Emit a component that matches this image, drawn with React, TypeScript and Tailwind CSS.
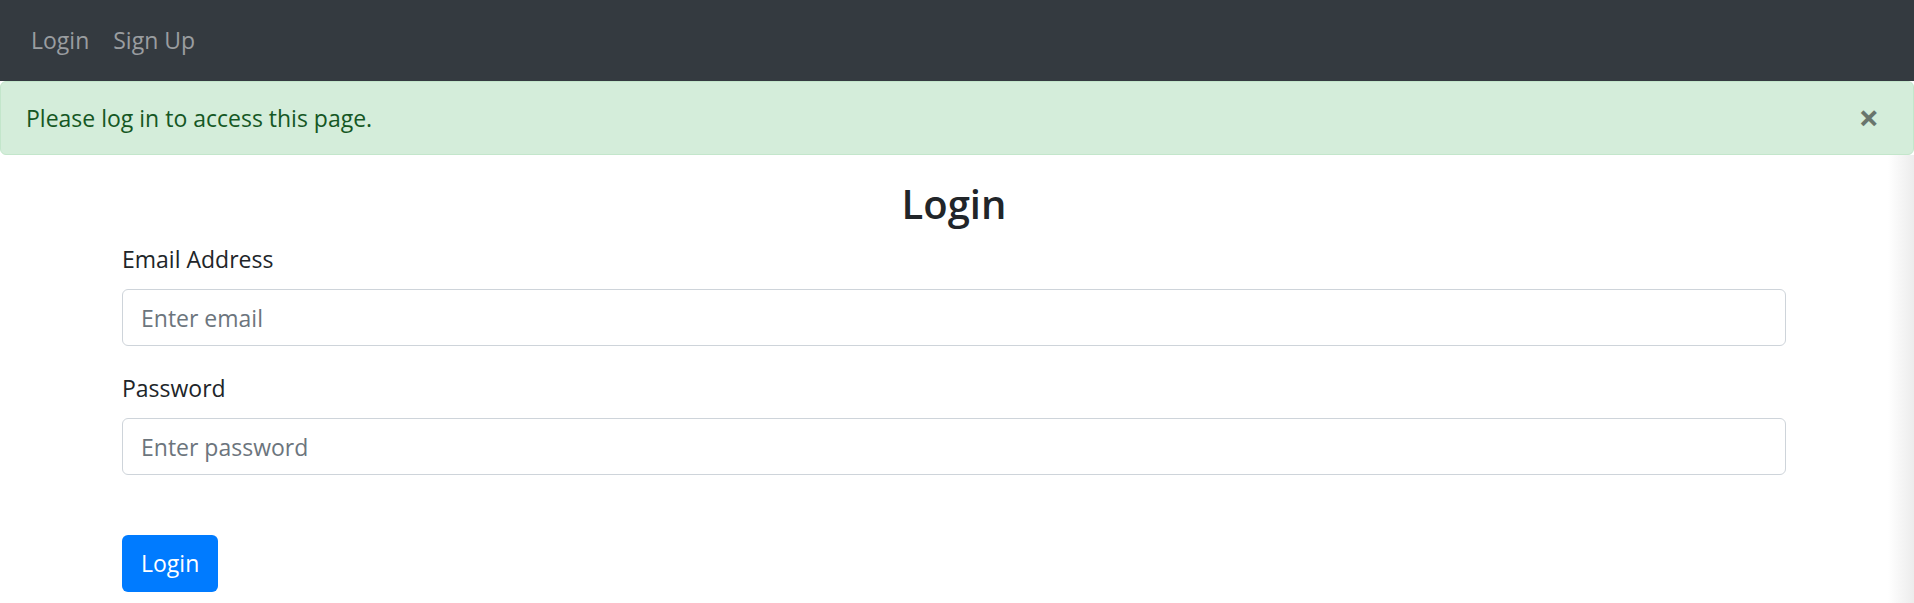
export default function App(): JSX.Element {
  return (
    <div className="min-h-screen bg-white font-['Open_Sans',sans-serif] text-[#212529]">
      <nav className="flex h-[81px] items-center bg-[#343a40] pl-[31px] text-[23px]">
        <a href="#" className="text-[#9a9da0]">
          Login
        </a>
        <a href="#" className="ml-[24px] text-[#9a9da0]">
          Sign Up
        </a>
      </nav>

      <div className="flex h-[74px] items-center justify-between rounded-[6px] border border-[#c3e6cb] bg-[#d4edda] pl-[25px] pr-[34px] text-[23px] text-[#155724]">
        <span>Please log in to access this page.</span>
        <button
          type="button"
          className="text-[36px] leading-none font-bold text-black opacity-50"
        >
          ×
        </button>
      </div>

      <section className="bg-[linear-gradient(to_right,#ffffff_calc(100%-26px),#ececec)] pb-[12px] pr-[6px] pt-[24px]">
        <div className="mx-auto w-[1664px]">
          <h3 className="mb-[12px] text-center text-[40px] leading-[50px] font-semibold">
            Login
          </h3>
          <form>
            <div className="mb-[24px]">
              <label htmlFor="email" className="mb-[12px] block text-[23px] leading-[36px]">
                Email Address
              </label>
              <input
                id="email"
                type="email"
                placeholder="Enter email"
                className="block h-[57px] w-full rounded-[6px] border-[1.5px] border-[#ced4da] px-[18px] text-[23px] placeholder:text-[#6c757d]"
              />
            </div>
            <div className="mb-[24px]">
              <label htmlFor="password" className="mb-[12px] block text-[23px] leading-[36px]">
                Password
              </label>
              <input
                id="password"
                type="password"
                placeholder="Enter password"
                className="block h-[57px] w-full rounded-[6px] border-[1.5px] border-[#ced4da] px-[18px] text-[23px] placeholder:text-[#6c757d]"
              />
            </div>
            <button
              type="submit"
              className="mt-[36px] h-[57px] rounded-[6px] bg-[#007bff] px-[19px] text-[23px] text-white"
            >
              Login
            </button>
          </form>
        </div>
      </section>
    </div>
  );
}
